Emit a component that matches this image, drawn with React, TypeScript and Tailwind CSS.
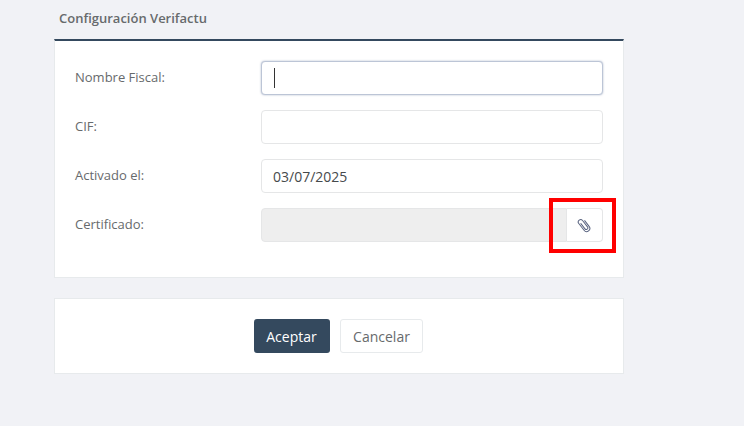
import React from 'react';

const rowClass = 'flex items-center h-[34px]';
const labelClass = 'w-[186px] shrink-0 text-[13px] text-[#676a6c]';
const inputClass =
  'w-[342px] h-[34px] rounded-[4px] border bg-white pl-[11px] pr-3 text-[14px] text-[#464a4c] outline-none';

const PaperclipIcon = () => (
  <svg width="16" height="16" viewBox="0 0 16 16" fill="none" stroke="#5a6480" strokeWidth="1" strokeLinecap="round">
    <path
      transform="rotate(-38 8 8)"
      d="M6.4 5v6.6a1.6 1.6 0 0 0 3.2 0V3.6a2.4 2.4 0 0 0-4.8 0v8.6a3.2 3.2 0 0 0 6.4 0V5"
    />
  </svg>
);

export default function App() {
  return (
    <div className="relative min-h-[426px] w-[744px] bg-[#f1f2f6] pl-[54px] pt-[9px] font-['Open_Sans',sans-serif]">
      <h2 className="h-[30px] pl-[5px] text-[13px] leading-[18px] font-semibold text-[#676a6c]">
        Configuración Verifactu
      </h2>

      {/* Form panel */}
      <div className="w-[570px] h-[239px] border-x border-b border-[#e7eaec] border-t-2 border-t-[#34495e] bg-white pl-[20px] pt-[20px]">
        <div className="flex flex-col gap-[15px]">
          <div className={rowClass}>
            <label className={labelClass}>Nombre Fiscal:</label>
            <div className="relative">
              <input className={`${inputClass} border-[#bcc5d6] shadow-[0_0_2px_rgba(130,145,175,0.7)]`} />
              <span className="absolute left-[13px] top-[7px] h-[20px] w-px bg-[#333]" />
            </div>
          </div>
          <div className={rowClass}>
            <label className={labelClass}>CIF:</label>
            <input className={`${inputClass} border-[#e5e6e7]`} />
          </div>
          <div className={rowClass}>
            <label className={labelClass}>Activado el:</label>
            <input className={`${inputClass} border-[#e5e6e7]`} defaultValue="03/07/2025" />
          </div>
          <div className={rowClass}>
            <label className={labelClass}>Certificado:</label>
            <div className="flex w-[342px] h-[34px]">
              <div className="flex-1 rounded-l-[4px] border border-[#e5e6e7] bg-[#eeeeee]" />
              <button className="flex w-[36px] items-center justify-center rounded-r-[4px] border border-l-0 border-[#e5e6e7] bg-white pr-[1px]">
                <PaperclipIcon />
              </button>
            </div>
          </div>
        </div>
      </div>

      {/* Actions panel */}
      <div className="mt-[20px] flex h-[76px] w-[570px] items-center justify-center gap-[10px] border border-[#e7eaec] bg-white pr-[2px]">
        <button className="h-[34px] w-[76px] rounded-[3px] bg-[#34495e] text-[14px] text-white">Aceptar</button>
        <button className="h-[34px] w-[83px] rounded-[3px] border border-[#e7eaec] bg-white pl-[1px] text-[14px] text-[#676a6c]">
          Cancelar
        </button>
      </div>

      {/* Annotation box */}
      <div className="absolute left-[549px] top-[198px] h-[55px] w-[67px] border-4 border-[#ff0000]" />
    </div>
  );
}
